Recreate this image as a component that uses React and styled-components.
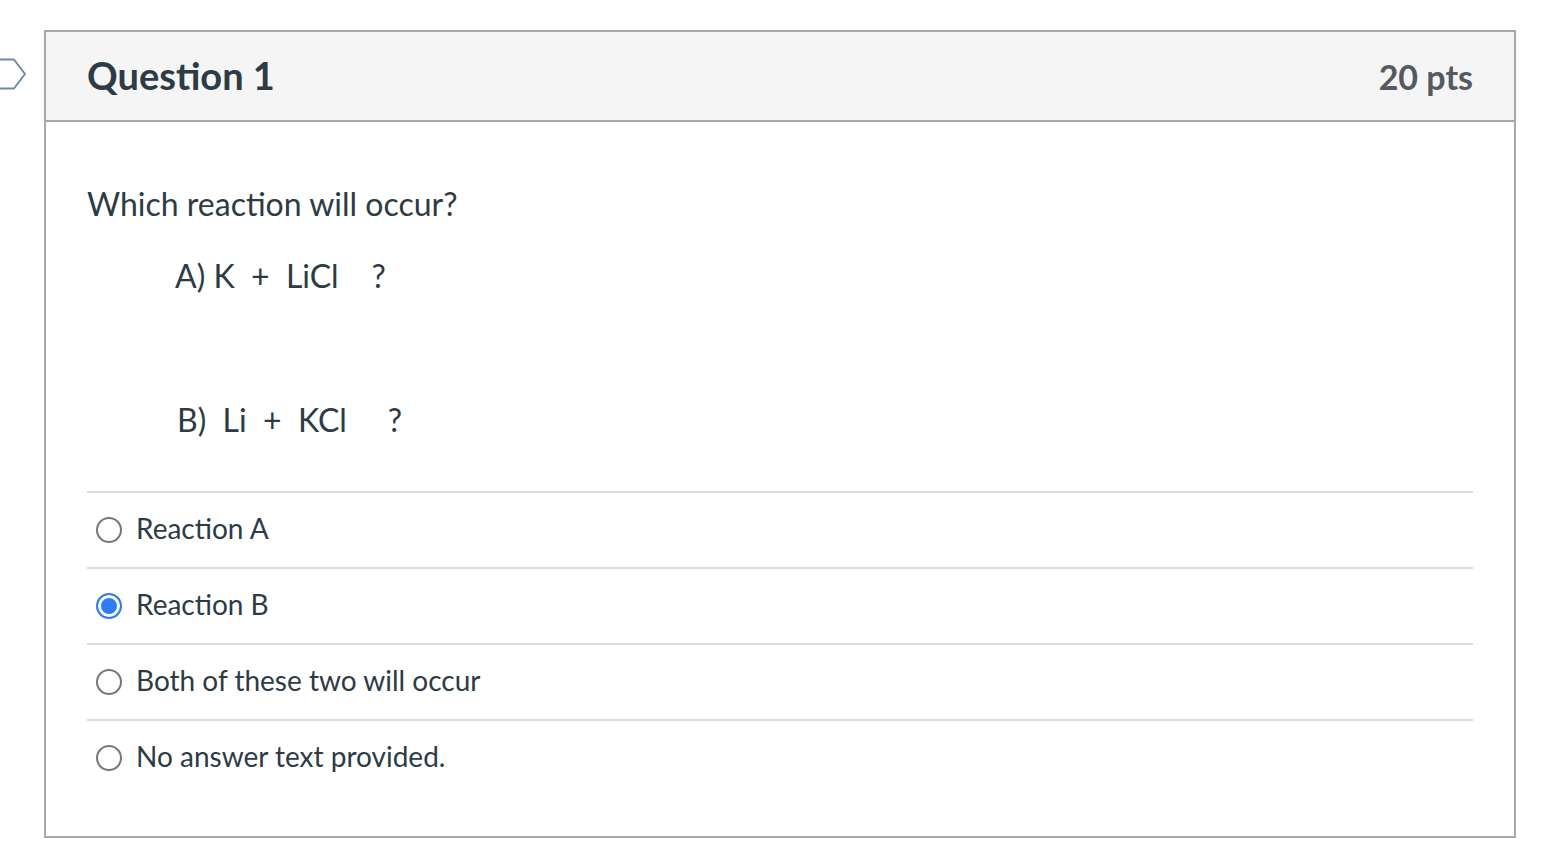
import React from "react";
import styled, { createGlobalStyle } from "styled-components";

const Global = createGlobalStyle`
  html, body { margin: 0; padding: 0; background: #fff; }
  body { font-family: Lato, "Open Sans", sans-serif; color: #2d3b45; }
`;

const Page = styled.div`
  position: relative;
  width: 1544px;
  height: 848px;
  padding: 30px 28px 0 44px;
  box-sizing: border-box;
`;

const Tag = styled.svg`
  position: absolute;
  left: 0;
  top: 57px;
`;

const Card = styled.section`
  border: 2px solid #a8a8a8;
  display: flex;
  flex-direction: column;
  height: 808px;
  box-sizing: border-box;
`;

const Header = styled.header`
  background: #f5f5f5;
  border-bottom: 2px solid #a8a8a8;
  height: 88px;
  display: flex;
  align-items: center;
  justify-content: space-between;
  padding: 0 41px 0 41px;
`;

const Title = styled.h2`
  margin: 0;
  font-size: 38px;
  font-weight: 700;
  color: #2d3b45;
  padding-bottom: 2px;
`;

const Points = styled.div`
  font-size: 34px;
  font-weight: 700;
  color: #555a5e;
`;

const Body = styled.div`
  padding: 0 41px;
  display: flex;
  flex-direction: column;
`;

const Prompt = styled.p`
  margin: 60px 0 0;
  font-size: 32px;
  line-height: 44px;
`;

const Reaction = styled.p`
  margin: ${(p) => p.$top}px 0 0 ${(p) => p.$indent}px;
  font-size: 32px;
  line-height: 44px;
  white-space: pre;
`;

const Answers = styled.ul`
  list-style: none;
  margin: 49px 0 0;
  padding: 0;
  border-top: 2px solid #dcdcdc;
`;

const Answer = styled.li`
  display: flex;
  align-items: center;
  height: 74px;
  gap: 14px;
  padding-left: 9px;
  font-size: 28px;
  border-bottom: ${(p) => (p.$last ? "none" : "2px solid #dcdcdc")};
`;

const Label = styled.span`
  padding-bottom: 5px;
`;

const Radio = styled.span`
  width: 26px;
  height: 26px;
  border-radius: 50%;
  box-sizing: border-box;
  flex: none;
  border: 2px solid ${(p) => (p.$checked ? "#2f7cf6" : "#777")};
  background: ${(p) => (p.$checked ? "#2f7cf6" : "#fff")};
  box-shadow: ${(p) => (p.$checked ? "inset 0 0 0 3px #fff" : "none")};
`;

const options = [
  "Reaction A",
  "Reaction B",
  "Both of these two will occur",
  "No answer text provided.",
];

export default function App() {
  return (
    <Page>
      <Global />
      <Tag width="28" height="34" viewBox="0 0 28 34">
        <polygon
          points="-4,2.5 14,2.5 25,17 14,31.5 -4,31.5"
          fill="none"
          stroke="#6d8aa6"
          strokeWidth="2"
          strokeLinejoin="round"
        />
      </Tag>
      <Card>
        <Header>
          <Title>Question 1</Title>
          <Points>20 pts</Points>
        </Header>
        <Body>
          <Prompt>Which reaction will occur?</Prompt>
          <Reaction $top={28} $indent={88}>{"A) K  +  LiCl    ?"}</Reaction>
          <Reaction $top={100} $indent={90}>{"B)  Li  +  KCl     ?"}</Reaction>
          <Answers>
            {options.map((o, i) => (
              <Answer key={o} $last={i === options.length - 1}>
                <Radio $checked={i === 1} />
                <Label>{o}</Label>
              </Answer>
            ))}
          </Answers>
        </Body>
      </Card>
    </Page>
  );
}
